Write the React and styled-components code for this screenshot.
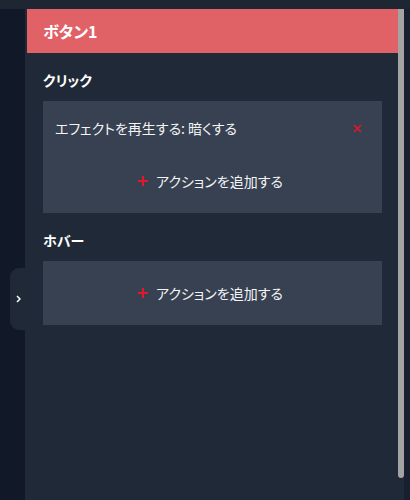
import React from "react";
import styled, { createGlobalStyle } from "styled-components";

const GlobalStyle = createGlobalStyle`
  html, body {
    margin: 0;
    padding: 0;
    background: #111827;
    font-family: "Noto Sans CJK JP", "Noto Sans", sans-serif;
    font-feature-settings: "palt";
    color: #f3f4f6;
    overflow: hidden;
  }
`;

const Screen = styled.div`
  width: 410px;
  height: 500px;
  display: flex;
  flex-direction: column;
  background: #111827;
`;

const TopStrip = styled.div`
  height: 9px;
  flex-shrink: 0;
  background: #1e2634;
`;

const Body = styled.div`
  flex: 1;
  display: flex;
  min-height: 0;
`;

const Gutter = styled.div`
  width: 25px;
  flex-shrink: 0;
`;

const Panel = styled.aside`
  position: relative;
  flex: 1;
  display: flex;
  background: #1f2937;
  padding-left: 2px;
`;

const Handle = styled.button`
  position: absolute;
  left: -15px;
  top: 259px;
  width: 15px;
  height: 62px;
  border: none;
  padding: 0 0 0 2px;
  background: #1f2937;
  border-radius: 9px 0 0 9px;
  display: flex;
  align-items: center;
  justify-content: center;
  cursor: pointer;
`;

const Scroll = styled.div`
  flex: 1;
  overflow: hidden;
`;

const ScrollTrack = styled.div`
  width: 6px;
  flex-shrink: 0;
`;

const ScrollThumb = styled.div`
  height: 469px;
  background: #a3a3a3;
  border-radius: 0 0 3px 3px;
`;

const EdgeStrip = styled.div`
  width: 6px;
  flex-shrink: 0;
  background: #182030;
`;

const Header = styled.div`
  height: 44px;
  display: flex;
  align-items: center;
  padding: 0 16px;
  background: #e06266;
  color: #ffffff;
  font-size: 16px;
  font-weight: 700;
`;

const Section = styled.section`
  padding: 16px 16px 0;
`;

const Heading = styled.h3`
  margin: 0 0 10px;
  font-size: 14px;
  line-height: 22px;
  font-weight: 700;
  color: #ffffff;
`;

const Card = styled.div`
  background: #374151;
  padding: 16px 12px;
  display: flex;
  flex-direction: column;
  gap: 26px;
`;

const ActionRow = styled.div`
  display: flex;
  align-items: center;
  justify-content: space-between;
  height: 22px;
  font-size: 14px;
  color: #f3f4f6;
`;

const RemoveButton = styled.button`
  border: none;
  background: none;
  padding: 0;
  margin-right: 8px;
  display: flex;
  cursor: pointer;
`;

const AddButton = styled.button`
  height: 32px;
  border: none;
  background: none;
  display: flex;
  align-items: center;
  justify-content: center;
  gap: 8px;
  padding: 0 4px 0 0;
  font-family: inherit;
  font-feature-settings: "palt";
  font-size: 14px;
  color: #f3f4f6;
  cursor: pointer;
`;

const Cross = () => (
  <svg width="9" height="9" viewBox="0 0 9 9">
    <path d="M1 1L8 8M8 1L1 8" stroke="#e0182c" strokeWidth="1.6" />
  </svg>
);

const Plus = () => (
  <svg width="10" height="10" viewBox="0 0 10 10">
    <path d="M5 0V10M0 5H10" stroke="#e0182c" strokeWidth="2" />
  </svg>
);

const Chevron = () => (
  <svg width="5" height="8" viewBox="0 0 5 8">
    <path d="M1 1L4 4L1 7" stroke="#ffffff" strokeWidth="1.5" fill="none" />
  </svg>
);

const Add = () => (
  <AddButton>
    <Plus />
    アクションを追加する
  </AddButton>
);

export default function App() {
  return (
    <>
      <GlobalStyle />
      <Screen>
        <TopStrip />
        <Body>
          <Gutter />
          <Panel>
            <Handle>
              <Chevron />
            </Handle>
            <Scroll>
              <Header>ボタン1</Header>
              <Section>
                <Heading>クリック</Heading>
                <Card>
                  <ActionRow>
                    エフェクトを再生する: 暗くする
                    <RemoveButton>
                      <Cross />
                    </RemoveButton>
                  </ActionRow>
                  <Add />
                </Card>
              </Section>
              <Section>
                <Heading>ホバー</Heading>
                <Card>
                  <Add />
                </Card>
              </Section>
            </Scroll>
            <ScrollTrack>
              <ScrollThumb />
            </ScrollTrack>
            <EdgeStrip />
          </Panel>
        </Body>
      </Screen>
    </>
  );
}
